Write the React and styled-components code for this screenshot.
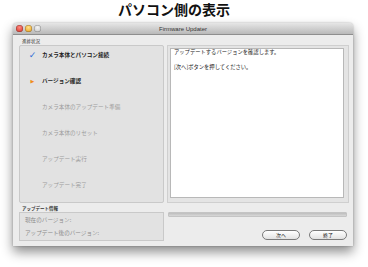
import React from 'react';
import styled, { createGlobalStyle } from 'styled-components';

const Global = createGlobalStyle`
  html, body { margin: 0; padding: 0; background: #fff; }
  body { font-family: "Noto Sans CJK JP", "Noto Sans", sans-serif; }
`;

const Page = styled.div`
  width: 368px;
  height: 267px;
  overflow: hidden;
  background: #fff;
`;

const Heading = styled.h1`
  margin: 0;
  height: 23px;
  padding: 1px 20px 0 0;
  box-sizing: border-box;
  font-size: 14px;
  line-height: 16px;
  font-weight: 700;
  text-align: center;
  color: #111;
`;

const Window = styled.div`
  margin-left: 13px;
  width: 340px;
  height: 223px;
  background: #ececec;
  border-radius: 4px 4px 0 0;
  box-shadow: 0 6px 12px rgba(0, 0, 0, 0.45), 0 0 2px rgba(0, 0, 0, 0.3);
  display: flex;
  flex-direction: column;
`;

const TitleBar = styled.div`
  height: 11px;
  flex: none;
  position: relative;
  display: flex;
  align-items: center;
  justify-content: center;
  background: linear-gradient(#e6e6e6, #b9b9b9);
  border-bottom: 1px solid #8e8e8e;
  border-radius: 4px 4px 0 0;
  font-family: "Liberation Sans", Arial, sans-serif;
  font-size: 6px;
  color: #333;
`;

const Lights = styled.div`
  position: absolute;
  left: 3px;
  top: 2px;
  display: flex;
  gap: 2px;
`;

const Light = styled.span`
  width: 7px;
  height: 7px;
  border-radius: 50%;
  background: ${(p) => p.$c};
  box-shadow: inset 0 0 0 0.5px rgba(0, 0, 0, 0.35);
`;

const Body = styled.div`
  flex: 1;
  display: grid;
  grid-template-columns: 145px 1fr;
  grid-template-rows: 7px 158px 9px 1fr;
  column-gap: 3px;
  padding: 3px 4px 5px 6px;
`;

const GroupLabel = styled.div`
  grid-column: 1;
  grid-row: ${(p) => p.$row};
  font-size: 4.5px;
  line-height: ${(p) => (p.$bold ? '10px' : '7px')};
  padding-left: 3px;
  color: #333;
  font-weight: ${(p) => (p.$bold ? 700 : 400)};
`;

const StepPanel = styled.div`
  grid-column: 1;
  grid-row: 2;
  background: #e2e2e2;
  border: 1px solid #c9c9c9;
  border-radius: 2px;
  display: flex;
  flex-direction: column;
  padding-top: 6px;
`;

const Step = styled.div`
  height: 26px;
  flex: none;
  display: flex;
  align-items: flex-start;
  font-size: 5.6px;
  line-height: 6px;
  color: ${(p) => (p.$on ? '#222' : '#9c9c9c')};
  font-weight: ${(p) => (p.$on ? 700 : 400)};
`;

const Mark = styled.span`
  width: 19px;
  flex: none;
  text-align: center;
  padding-left: 3px;
  font-size: ${(p) => p.$size};
  color: ${(p) => p.$c};
  font-family: "DejaVu Sans", sans-serif;
`;

const MessageFrame = styled.div`
  grid-column: 2;
  grid-row: 1 / span 2;
  margin-top: 7px;
  background: #e4e4e4;
  border: 1px solid #cfcfcf;
  padding: 2px 4px 4px 2px;
  display: flex;
`;

const MessageBox = styled.div`
  flex: 1;
  background: #fff;
  border: 1px solid #b8b8b8;
  padding: 0 3px;
  font-size: 5.3px;
  line-height: 7px;
  color: #222;
  p { margin: 0 0 8px; }
`;

const InfoBox = styled.div`
  grid-column: 1;
  grid-row: 4;
  background: #e2e2e2;
  border: 1px solid #c9c9c9;
  padding: 0 5px;
  font-size: 5.6px;
  line-height: 13px;
  color: #8a8a8a;
  display: flex;
  flex-direction: column;
  justify-content: center;
`;

const Controls = styled.div`
  grid-column: 2;
  grid-row: 3 / span 2;
  display: flex;
  flex-direction: column;
  padding: 9px 2px 0 1px;
`;

const Progress = styled.div`
  height: 3px;
  background: linear-gradient(#bdbdbd, #d8d8d8);
  border: 1px solid #c4c4c4;
  border-radius: 1px;
`;

const Buttons = styled.div`
  margin-top: auto;
  margin-bottom: 1px;
  display: flex;
  justify-content: flex-end;
  gap: 9px;
`;

const Button = styled.button`
  width: 38px;
  height: 10px;
  padding: 0;
  border: 1px solid #7a7a7a;
  border-radius: 5px;
  background: linear-gradient(#ffffff, #e2e2e2);
  font-family: inherit;
  font-size: 5px;
  line-height: 8px;
  color: #222;
`;

const steps = [
  { label: 'カメラ本体とパソコン接続', state: 'done' },
  { label: 'バージョン確認', state: 'current' },
  { label: 'カメラ本体のアップデート準備' },
  { label: 'カメラ本体のリセット' },
  { label: 'アップデート実行' },
  { label: 'アップデート完了' },
];

export default function App() {
  return (
    <Page>
      <Global />
      <Heading>パソコン側の表示</Heading>
      <Window>
        <TitleBar>
          <Lights>
            <Light $c="radial-gradient(circle at 50% 35%, #ff8a80, #d42a1f)" />
            <Light $c="radial-gradient(circle at 50% 35%, #ffe08a, #e89a12)" />
            <Light $c="radial-gradient(circle at 50% 35%, #f4f4f4, #c2c2c2)" />
          </Lights>
          Firmware Updater
        </TitleBar>
        <Body>
          <GroupLabel $row={1}>進捗状況</GroupLabel>
          <StepPanel>
            {steps.map((s) => (
              <Step key={s.label} $on={!!s.state}>
                <Mark
                  $c={s.state === 'done' ? '#2f6fd6' : '#f08c1c'}
                  $size={s.state === 'done' ? '9px' : '5px'}
                >
                  {s.state === 'done' ? '✓' : s.state === 'current' ? '▶' : ''}
                </Mark>
                {s.label}
              </Step>
            ))}
          </StepPanel>
          <MessageFrame>
            <MessageBox>
              <p>アップデートするバージョンを確認します。</p>
              <p>[次へ]ボタンを押してください。</p>
            </MessageBox>
          </MessageFrame>
          <GroupLabel $row={3} $bold>アップデート情報</GroupLabel>
          <InfoBox>
            <div>現在のバージョン:</div>
            <div>アップデート後のバージョン:</div>
          </InfoBox>
          <Controls>
            <Progress />
            <Buttons>
              <Button>次へ</Button>
              <Button>終了</Button>
            </Buttons>
          </Controls>
        </Body>
      </Window>
    </Page>
  );
}
